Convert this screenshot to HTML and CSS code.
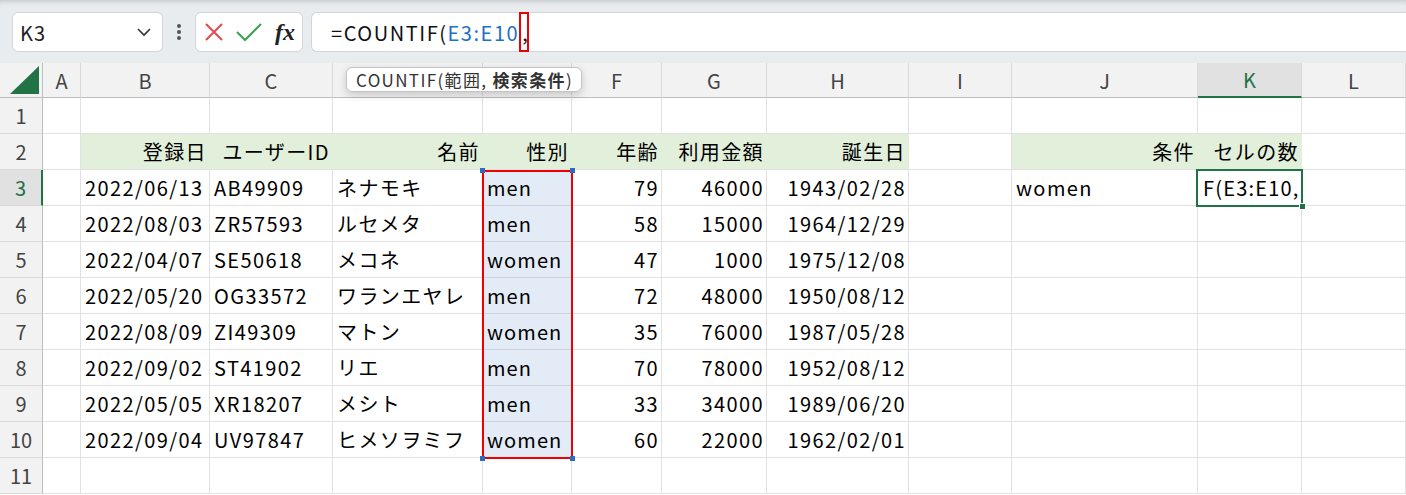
FILE: index.html
```html
<!DOCTYPE html>
<html lang="ja">
<head>
<meta charset="utf-8">
<title>COUNTIF</title>
<link rel="stylesheet" href="styles.css">
</head>
<body>
<div class="toolbar">
  <div class="namebox"><span>K3</span>
    <svg width="16" height="10" viewBox="0 0 16 10"><path d="M2 2 L8 8 L14 2" fill="none" stroke="#333" stroke-width="1.6"/></svg>
  </div>
  <div class="dots"><svg width="6" height="18" viewBox="0 0 6 18"><circle cx="3" cy="3" r="2" fill="#555"/><circle cx="3" cy="9" r="2" fill="#555"/><circle cx="3" cy="15" r="2" fill="#555"/></svg></div>
  <div class="fxbox">
    <svg width="22" height="22" viewBox="0 0 22 22"><path d="M3 3 L19 19 M19 3 L3 19" stroke="#e5484d" stroke-width="2" fill="none"/></svg>
    <svg width="28" height="22" viewBox="0 0 28 22"><path d="M2 11 L10 19 L26 3" stroke="#3da153" stroke-width="2" fill="none"/></svg>
    <span class="fx">fx</span>
  </div>
  <div class="formula"><span>=COUNTIF(</span><span class="ref">E3:E10</span><span class="comma">,</span></div>
</div>
<div class="tooltip">COUNTIF(範囲, <b>検索条件</b>)</div>
<div class="sheet">
  <div class="ch corner"><svg width="29" height="28" viewBox="0 0 29 28"><path d="M29 0 L29 28 L0 28 Z" fill="#217346"/></svg></div>
  <div class="ch">A</div><div class="ch">B</div><div class="ch">C</div><div class="ch"></div><div class="ch"></div><div class="ch">F</div><div class="ch">G</div><div class="ch">H</div><div class="ch">I</div><div class="ch">J</div><div class="ch hl-col">K</div><div class="ch">L</div>

  <div class="rh">1</div><div class="c"></div><div class="c"></div><div class="c"></div><div class="c"></div><div class="c"></div><div class="c"></div><div class="c"></div><div class="c"></div><div class="c"></div><div class="c"></div><div class="c"></div><div class="c"></div>

  <div class="rh">2</div><div class="c"></div><div class="c g r">登録日</div><div class="c g r">ユーザーID</div><div class="c g r">名前</div><div class="c g r">性別</div><div class="c g r">年齢</div><div class="c g r">利用金額</div><div class="c g r">誕生日</div><div class="c"></div><div class="c g r">条件</div><div class="c g r">セルの数</div><div class="c"></div>

  <div class="rh hl-row">3</div><div class="c"></div><div class="c">2022/06/13</div><div class="c">AB49909</div><div class="c">ネナモキ</div><div class="c s">men</div><div class="c r">79</div><div class="c r">46000</div><div class="c r">1943/02/28</div><div class="c"></div><div class="c">women</div><div class="c edit">F(E3:E10,</div><div class="c"></div>

  <div class="rh">4</div><div class="c"></div><div class="c">2022/08/03</div><div class="c">ZR57593</div><div class="c">ルセメタ</div><div class="c s">men</div><div class="c r">58</div><div class="c r">15000</div><div class="c r">1964/12/29</div><div class="c"></div><div class="c"></div><div class="c"></div><div class="c"></div>

  <div class="rh">5</div><div class="c"></div><div class="c">2022/04/07</div><div class="c">SE50618</div><div class="c">メコネ</div><div class="c s">women</div><div class="c r">47</div><div class="c r">1000</div><div class="c r">1975/12/08</div><div class="c"></div><div class="c"></div><div class="c"></div><div class="c"></div>

  <div class="rh">6</div><div class="c"></div><div class="c">2022/05/20</div><div class="c">OG33572</div><div class="c">ワランエヤレ</div><div class="c s">men</div><div class="c r">72</div><div class="c r">48000</div><div class="c r">1950/08/12</div><div class="c"></div><div class="c"></div><div class="c"></div><div class="c"></div>

  <div class="rh">7</div><div class="c"></div><div class="c">2022/08/09</div><div class="c">ZI49309</div><div class="c">マトン</div><div class="c s">women</div><div class="c r">35</div><div class="c r">76000</div><div class="c r">1987/05/28</div><div class="c"></div><div class="c"></div><div class="c"></div><div class="c"></div>

  <div class="rh">8</div><div class="c"></div><div class="c">2022/09/02</div><div class="c">ST41902</div><div class="c">リエ</div><div class="c s">men</div><div class="c r">70</div><div class="c r">78000</div><div class="c r">1952/08/12</div><div class="c"></div><div class="c"></div><div class="c"></div><div class="c"></div>

  <div class="rh">9</div><div class="c"></div><div class="c">2022/05/05</div><div class="c">XR18207</div><div class="c">メシト</div><div class="c s">men</div><div class="c r">33</div><div class="c r">34000</div><div class="c r">1989/06/20</div><div class="c"></div><div class="c"></div><div class="c"></div><div class="c"></div>

  <div class="rh">10</div><div class="c"></div><div class="c">2022/09/04</div><div class="c">UV97847</div><div class="c">ヒメソヲミフ</div><div class="c s">women</div><div class="c r">60</div><div class="c r">22000</div><div class="c r">1962/02/01</div><div class="c"></div><div class="c"></div><div class="c"></div><div class="c"></div>

  <div class="rh">11</div><div class="c"></div><div class="c"></div><div class="c"></div><div class="c"></div><div class="c"></div><div class="c"></div><div class="c"></div><div class="c"></div><div class="c"></div><div class="c"></div><div class="c"></div><div class="c"></div>

  <div class="range"><i class="h tl"></i><i class="h tr"></i><i class="h bl"></i><i class="h br"></i></div>
  <div class="active"><i class="fill"></i></div>
</div>
</body>
</html>
```

FILE: styles.css
```css
html, body {
  margin: 0;
  padding: 0;
}
body {
  width: 1406px;
  height: 495px;
  overflow: hidden;
  background: #fff;
  position: relative;
  font-family: "Noto Sans CJK JP", "Noto Sans", sans-serif;
  color: #000;
}
.toolbar {
  height: 63px;
  box-sizing: border-box;
  background: #e9ecef;
  box-shadow: inset 0 5px 4px -3px rgba(0, 0, 0, 0.14);
  display: flex;
  align-items: flex-start;
  padding: 12px 0 0 12px;
}
.namebox {
  width: 151px;
  height: 40px;
  box-sizing: border-box;
  background: #fff;
  border: 1px solid #d3d5d8;
  border-radius: 6px;
  display: flex;
  align-items: center;
  justify-content: space-between;
  padding: 0 10px 0 7px;
  font-size: 20px;
  letter-spacing: 1px;
  color: #222;
}
.dots {
  width: 32px;
  height: 40px;
  display: flex;
  align-items: center;
  justify-content: center;
}
.fxbox {
  width: 108px;
  height: 40px;
  box-sizing: border-box;
  background: #fff;
  border: 1px solid #d3d5d8;
  border-radius: 6px;
  display: flex;
  align-items: center;
  gap: 10px;
  padding-left: 7px;
  margin-right: 8px;
}
.fx {
  font-family: "Liberation Serif", "DejaVu Serif", serif;
  font-style: italic;
  font-weight: bold;
  font-size: 24px;
  color: #222;
  margin-left: 2px;
}
.formula {
  flex: 1;
  height: 40px;
  box-sizing: border-box;
  background: #fff;
  border: 1px solid #d3d5d8;
  border-right: none;
  border-radius: 6px 0 0 6px;
  display: flex;
  align-items: center;
  padding-left: 19px;
  font-size: 20px;
  letter-spacing: 1.55px;
  color: #111;
}
.formula .ref {
  color: #1f6fc6;
}
.formula .comma {
  align-self: stretch;
  display: flex;
  align-items: center;
  border: 2px solid #f00000;
  box-sizing: border-box;
  width: 10px;
  letter-spacing: 0;
  padding-left: 1px;
  margin-top: -1px;
  margin-bottom: -1px;
}
.tooltip {
  position: absolute;
  left: 346px;
  top: 67px;
  height: 25px;
  box-sizing: border-box;
  padding: 0 8px 0 9px;
  background: #fff;
  border: 1px solid #c4c4c4;
  border-radius: 6px;
  box-shadow: 0 3px 8px rgba(0, 0, 0, 0.18);
  font-size: 17px;
  letter-spacing: 1.35px;
  line-height: 23px;
  color: #333;
  white-space: nowrap;
  z-index: 5;
}
.tooltip b {
  font-weight: bold;
}
.sheet {
  position: relative;
  display: grid;
  grid-template-columns: 43px 38px 129px 123px 150px 89px 90px 105px 142px 103px 186px 104px 104px;
  grid-template-rows: 35px repeat(11, 36px);
}
.c {
  box-sizing: border-box;
  border-right: 1px solid #e1e1e1;
  border-bottom: 1px solid #e1e1e1;
  padding: 0 4px 0 4px;
  display: flex;
  align-items: center;
  font-size: 20px;
  letter-spacing: 1.4px;
  white-space: nowrap;
  overflow: hidden;
}
.r {
  justify-content: flex-end;
  padding-right: 2px;
}
.g {
  background: #e2efda;
  border-right-color: #e2efda;
}
.s {
  background: #e3ecf6;
  border-bottom-color: #cdd5de;
  letter-spacing: 1.1px;
}
.ch {
  box-sizing: border-box;
  background: #f2f2f2;
  border-right: 1px solid #d9d9d9;
  border-bottom: 1px solid #bdbdbd;
  display: flex;
  align-items: center;
  justify-content: center;
  font-size: 20px;
  color: #444;
}
.corner {
  justify-content: flex-end;
  align-items: flex-end;
  padding: 0 3px 3px 0;
  border-right: 1px solid #bdbdbd;
}
.rh {
  box-sizing: border-box;
  background: #f2f2f2;
  border-right: 1px solid #bdbdbd;
  border-bottom: 1px solid #d9d9d9;
  display: flex;
  align-items: center;
  justify-content: center;
  font-size: 20px;
  color: #444;
}
.hl-col {
  background: #e1e1e1;
  border-bottom: 2px solid #217346;
  color: #217346;
}
.hl-row {
  background: #e1e1e1;
  border-right: 2px solid #217346;
  color: #217346;
}
.edit {
  padding-left: 5px;
  letter-spacing: 1.2px;
}
.range {
  position: absolute;
  left: 482px;
  top: 107px;
  width: 91px;
  height: 289px;
  box-sizing: border-box;
  border: 2px solid #f00000;
}
.range .h {
  position: absolute;
  width: 5px;
  height: 5px;
  background: #2b6cc0;
}
.range .tl { left: -4px; top: -4px; }
.range .tr { right: -4px; top: -4px; }
.range .bl { left: -4px; bottom: -4px; }
.range .br { right: -4px; bottom: -4px; }
.active {
  position: absolute;
  left: 1196px;
  top: 106px;
  width: 107px;
  height: 38px;
  box-sizing: border-box;
  border: 2px solid #217346;
}
.active .fill {
  position: absolute;
  right: -5px;
  bottom: -5px;
  width: 5px;
  height: 5px;
  background: #217346;
  border: 1px solid #fff;
}
```
